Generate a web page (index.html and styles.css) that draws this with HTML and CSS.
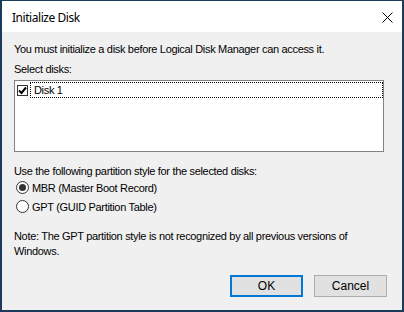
FILE: index.html
```html
<!DOCTYPE html>
<html>
<head>
<meta charset="utf-8">
<link rel="stylesheet" href="styles.css">
</head>
<body>
<div class="window">
  <div class="titlebar">
    <span class="title">Initialize Disk</span>
    <svg class="close" width="11" height="11" viewBox="0 0 11 11"><path d="M0.5 0.5L10.5 10.5M10.5 0.5L0.5 10.5" stroke="#000" stroke-width="1" fill="none"/></svg>
  </div>
  <div class="content">
    <div class="line intro">You must initialize a disk before Logical Disk Manager can access it.</div>
    <div class="line label">Select disks:</div>
    <div class="listbox">
      <div class="item">
        <span class="check"><svg width="9" height="9" viewBox="0 0 9 9"><path d="M1 4.5L3.5 7L8 1.5" stroke="#000" stroke-width="2" fill="none"/></svg></span>
        <span class="itemtext">Disk 1</span>
      </div>
    </div>
    <div class="line label2">Use the following partition style for the selected disks:</div>
    <div class="radio"><span class="circle on"><span class="dot"></span></span><span>MBR (Master Boot Record)</span></div>
    <div class="radio"><span class="circle"></span><span>GPT (GUID Partition Table)</span></div>
    <div class="note">Note: The GPT partition style is not recognized by all previous versions of Windows.</div>
    <div class="buttons">
      <div class="btn ok">OK</div>
      <div class="btn">Cancel</div>
    </div>
  </div>
</div>
</body>
</html>
```
FILE: styles.css
```css
html, body { margin: 0; padding: 0; }
body { width: 404px; height: 312px; overflow: hidden; font-family: "Liberation Sans", Arial, sans-serif; font-size: 11px; letter-spacing: -0.32px; color: #000; }
.window { box-sizing: border-box; width: 404px; height: 312px; border: 1px solid #1c3a5a; border-left-width: 2px; border-right-width: 2px; border-bottom-width: 2px; background: #f0f0f0; display: flex; flex-direction: column; }
.titlebar { height: 31px; box-sizing: border-box; padding: 2px 9px 0 10px; background: #fff; display: flex; align-items: center; justify-content: space-between; }
.title { font-family: "Noto Sans", "Liberation Sans", sans-serif; font-size: 12px; letter-spacing: -0.45px; color: #000; }
.close { display: block; }
.content { flex: 1; padding: 11px 18px 0 12px; display: flex; flex-direction: column; }
.line { line-height: 13px; }
.label { margin-top: 7px; }
.listbox { margin-top: 4px; height: 72px; border: 1px solid #828282; background: #fff; padding: 1px 0 0 2px; box-sizing: border-box; }
.item { display: flex; align-items: center; height: 16px; }
.check { width: 11px; height: 11px; border: 1px solid #333; box-sizing: border-box; display: flex; align-items: center; justify-content: center; background: #fff; margin-right: 2px; }
.check svg { display: block; }
.itemtext { flex: 1; border: 1px dotted #000; height: 16px; box-sizing: border-box; padding-left: 3px; line-height: 14px; }
.label2 { margin-top: 13px; }
.radio { display: flex; align-items: center; height: 19px; margin-left: 2px; }
.radio:first-of-type { margin-top: 4px; }
.circle { width: 13px; height: 13px; border: 1px solid #333; border-radius: 50%; box-sizing: border-box; background: #fff; margin-right: 3px; display: flex; align-items: center; justify-content: center; }
.dot { width: 7px; height: 7px; border-radius: 50%; background: #333; }
.note { margin-top: 13px; line-height: 15px; }
.buttons { margin-top: auto; margin-bottom: 13px; display: flex; justify-content: flex-end; gap: 11px; margin-right: -3px; }
.btn { width: 73px; height: 22px; box-sizing: border-box; border: 1px solid #adadad; background: #e1e1e1; display: flex; align-items: center; justify-content: center; font-size: 12px; letter-spacing: 0; }
.ok { border: 2px solid #0078d7; }
```
